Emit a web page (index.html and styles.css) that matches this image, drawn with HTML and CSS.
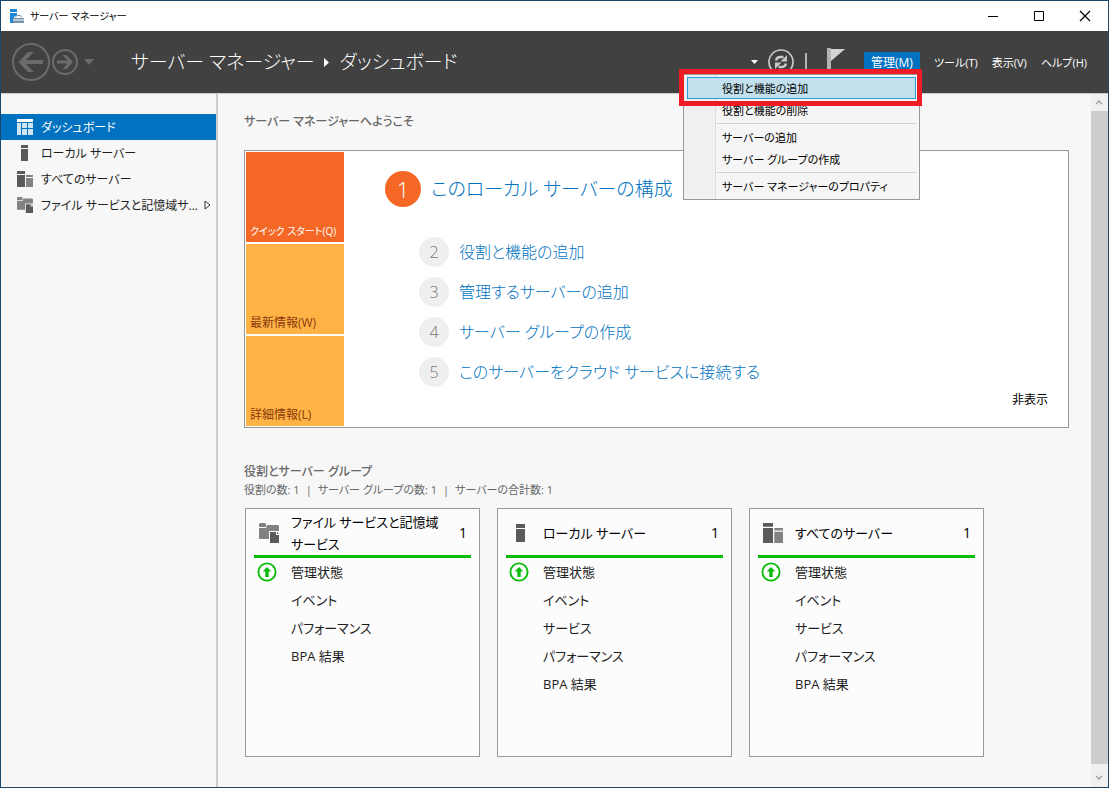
FILE: index.html
```html
<!DOCTYPE html>
<html lang="ja">
<head>
<meta charset="utf-8">
<meta name="viewport" content="width=device-width, initial-scale=1">
<title>サーバー マネージャー</title>
<link rel="stylesheet" href="styles.css">
</head>
<body>
<svg class="defs" width="0" height="0" aria-hidden="true">
  <symbol id="i-local" viewBox="0 0 16 16"><path fill="#5a5a5a" d="M4 0h7v3H4zM4 4h7v12H4z"/></symbol>
  <symbol id="i-all" viewBox="0 0 16 16"><path fill="#5a5a5a" d="M0 0h8v3H0zM0 4h8v12H0z"/><path fill="#828282" d="M9 4h7v2H9zM9 7h7v9H9z"/></symbol>
  <symbol id="i-files" viewBox="0 0 20 20"><path fill="#828282" d="M0 1l1-1h5l1 1v3H0zM0 5h7l1-3h11l1 1v5H10v8H0z"/><path fill="#5a5a5a" d="M11 9h6v3h3v8h-9z"/><path fill="#5a5a5a" d="M18 9l2 2h-2z"/></symbol>
  <symbol id="i-ok" viewBox="0 0 20 20"><circle cx="10" cy="10" r="8.6" fill="#fff" stroke="#0bbd0b" stroke-width="1.9"/><path fill="#0bbd0b" d="M10 5l4.3 4.6h-2.6V15H8.300V9.600H5.700z"/></symbol>
</svg>
<div class="window">
  <header class="titlebar">
    <svg class="app-icon" width="14" height="14" viewBox="0 0 14 14"><path fill="#1e88d8" d="M0 0h7v3H0zM0 4h7v2L4 8v6H0z"/><path fill="#7590a8" d="M3 9h11v5H3z"/><path fill="none" stroke="#7590a8" d="M5.500 8.500l1-2h4l1 2"/><path fill="#fff" d="M3 10.500h11v1H3z"/></svg>
    <span class="window-title">サーバー マネージャー</span>
    <div class="window-buttons">
      <button aria-label="最小化"><svg width="12" height="12"><path d="M1 6.500h10" stroke="#000"/></svg></button>
      <button aria-label="最大化"><svg width="12" height="12"><path d="M1.500 1.500h9v9h-9z" fill="none" stroke="#000"/></svg></button>
      <button aria-label="閉じる"><svg width="12" height="12"><path d="M1 1l10 10M11 1L1 11" stroke="#000" stroke-width="1.200"/></svg></button>
    </div>
  </header>

  <div class="navbar">
    <div class="history">
      <button aria-label="戻る"><svg width="38" height="38" viewBox="0 0 38 38"><circle cx="19" cy="19" r="18" fill="none" stroke="#6b6b6b" stroke-width="2"/><path d="M31 17v4H14l8 8h-6L6.500 19 16 9h6l-8 8z" fill="#6b6b6b"/></svg></button>
      <button aria-label="進む"><svg width="26" height="26" viewBox="0 0 26 26"><circle cx="13" cy="13" r="12" fill="none" stroke="#6b6b6b" stroke-width="2"/><path d="M5 11.500v3h10.500L10.500 20h4l6.500-7-6.500-7h-4l5 5.500z" fill="#6b6b6b"/></svg></button>
      <button aria-label="履歴"><svg width="10" height="6"><path d="M0 0h10L5 6z" fill="#6b6b6b"/></svg></button>
    </div>
    <h1 class="breadcrumb">
      <span>サーバー マネージャー</span>
      <svg width="5" height="9"><path d="M0 0l5 4.500L0 9z" fill="#fff"/></svg>
      <span>ダッシュボード</span>
    </h1>
    <div class="tools">
      <svg class="drop" width="7" height="4"><path d="M0 0h7L3.500 4z" fill="#fff"/></svg>
      <button aria-label="最新の情報に更新"><svg width="26" height="26" viewBox="0 0 26 26"><circle cx="13" cy="13" r="12" fill="none" stroke="#c8c8c8" stroke-width="1.700"/><path d="M8 11.500C8.500 9 10 8 12.500 8h3M18 14.500c-.5 2.500-2 3.500-4.500 3.500h-3" fill="none" stroke="#c8c8c8" stroke-width="2.400"/><path d="M19 6v6.500h-6.500zM7 20v-6.500h6.500z" fill="#c8c8c8"/></svg></button>
      <span class="divider"></span>
      <button aria-label="通知"><svg width="18" height="28" viewBox="0 0 18 28"><path d="M0 0h4v28H0z" fill="#b4b4b4"/><path d="M4 1h14L4 13z" fill="#d4d4d4"/></svg></button>
    </div>
    <nav class="menubar">
      <div class="menu-host">
        <button class="menu-button active" aria-expanded="true">管理(M)</button>
        <div class="menu" role="menu">
          <button role="menuitem" class="selected">役割と機能の追加</button>
          <button role="menuitem">役割と機能の削除</button>
          <hr>
          <button role="menuitem">サーバーの追加</button>
          <button role="menuitem">サーバー グループの作成</button>
          <hr>
          <button role="menuitem">サーバー マネージャーのプロパティ</button>
          <div class="highlight"></div>
        </div>
      </div>
      <button class="menu-button">ツール(T)</button>
      <button class="menu-button">表示(V)</button>
      <button class="menu-button">ヘルプ(H)</button>
    </nav>
  </div>

  <div class="body">
    <nav class="sidebar">
      <a href="#" class="side-item current"><svg width="16" height="16"><path fill="#fff" d="M0 0h16v3H0z"/><path fill="#cfe5f4" d="M0 4h4v12H0zM5 4h5v5H5zM11 4h5v5h-5zM5 10h5v6H5zM11 10h5v6h-5z"/></svg><span>ダッシュボード</span></a>
      <a href="#" class="side-item"><svg width="16" height="16"><use href="#i-local"/></svg><span>ローカル サーバー</span></a>
      <a href="#" class="side-item"><svg width="16" height="16"><use href="#i-all"/></svg><span>すべてのサーバー</span></a>
      <a href="#" class="side-item"><svg width="16" height="16"><use href="#i-files"/></svg><span>ファイル サービスと記憶域サ...</span><svg class="expand" width="7" height="10"><path d="M1 1l5 4-5 4z" fill="#fff" stroke="#333"/></svg></a>
    </nav>

    <main class="content">
      <h2>サーバー マネージャーへようこそ</h2>
      <section class="welcome">
        <div class="tiles">
          <button class="tile tile-on">クイック スタート(Q)</button>
          <button class="tile">最新情報(W)</button>
          <button class="tile">詳細情報(L)</button>
        </div>
        <ol class="steps">
          <li class="step first"><span class="num">1</span><a href="#">このローカル サーバーの構成</a></li>
          <li class="step"><span class="num">2</span><a href="#">役割と機能の追加</a></li>
          <li class="step"><span class="num">3</span><a href="#">管理するサーバーの追加</a></li>
          <li class="step"><span class="num">4</span><a href="#">サーバー グループの作成</a></li>
          <li class="step"><span class="num">5</span><a href="#">このサーバーをクラウド サービスに接続する</a></li>
        </ol>
        <button class="hide">非表示</button>
      </section>

      <h2 class="groups-title">役割とサーバー グループ</h2>
      <p class="counts"><span>役割の数: 1</span><span>|</span><span>サーバー グループの数: 1</span><span>|</span><span>サーバーの合計数: 1</span></p>
      <div class="cards">
        <article class="card">
          <h3><svg width="20" height="20"><use href="#i-files"/></svg><span>ファイル サービスと記憶域<br>サービス</span><b>1</b></h3>
          <ul>
            <li><svg width="20" height="20"><use href="#i-ok"/></svg>管理状態</li>
            <li>イベント</li>
            <li>パフォーマンス</li>
            <li>BPA 結果</li>
          </ul>
        </article>
        <article class="card">
          <h3><svg width="20" height="18" viewBox="0 0 20 18"><path fill="#5a5a5a" d="M5 0h9v4H5zM5 5h9v13H5z"/></svg><span>ローカル サーバー</span><b>1</b></h3>
          <ul>
            <li><svg width="20" height="20"><use href="#i-ok"/></svg>管理状態</li>
            <li>イベント</li>
            <li>サービス</li>
            <li>パフォーマンス</li>
            <li>BPA 結果</li>
          </ul>
        </article>
        <article class="card">
          <h3><svg width="20" height="20"><use href="#i-all"/></svg><span>すべてのサーバー</span><b>1</b></h3>
          <ul>
            <li><svg width="20" height="20"><use href="#i-ok"/></svg>管理状態</li>
            <li>イベント</li>
            <li>サービス</li>
            <li>パフォーマンス</li>
            <li>BPA 結果</li>
          </ul>
        </article>
      </div>
    </main>

    <div class="scrollbar">
      <svg width="16" height="17"><path d="M5 10l3-3 3 3" fill="none" stroke="#a0a0a0" stroke-width="1.500"/></svg>
      <div class="thumb"></div>
      <svg width="16" height="23"><path d="M5 12l3 3 3-3" fill="none" stroke="#a0a0a0" stroke-width="1.500"/></svg>
    </div>
  </div>
</div>
</body>
</html>
```
FILE: styles.css
```css
* { box-sizing: border-box; }
body {
  margin: 0;
  font-family: "Open Sans", "Noto Sans CJK JP", sans-serif;
  font-size: 12px;
  line-height: 20px;
  font-feature-settings: "palt";
  color: #000;
}
button { font: inherit; font-feature-settings: inherit; color: inherit; background: none; border: 0; padding: 0; white-space: nowrap; }
a { color: inherit; text-decoration: none; }
svg { display: block; flex: none; }
h1, h2, h3, p, ul, ol { margin: 0; padding: 0; list-style: none; font-weight: 400; }
.defs { position: absolute; }

.window { min-height: 100vh; display: flex; flex-direction: column; border: 1px solid #19476b; background: #f7f7f7; }

.titlebar { display: flex; align-items: center; height: 30px; padding-left: 9px; background: #fff; }
.window-title { margin-left: 6px; font-size: 10px; }
.window-buttons { display: flex; margin-left: auto; }
.window-buttons button { width: 46px; height: 28px; display: grid; place-items: center; }

.navbar { display: flex; align-items: center; height: 63px; background: #414141; border-bottom: 1px solid #ccc; color: #fff; padding: 0 21px 0 11px; }
.history { display: flex; align-items: center; gap: 2px; }
.history button:last-child { margin-left: 4px; }
.breadcrumb { display: flex; align-items: center; gap: 10px; margin-left: 37px; font-size: 19px; line-height: 32px; font-weight: 300; white-space: nowrap; }
.tools { display: flex; align-items: center; margin-left: auto; }
.tools .drop { margin-right: 10px; }
.divider { width: 2px; height: 18px; margin: 0 20px 0 11px; background: #b4b4b4; }
.menubar { display: flex; align-items: center; gap: 14px; margin-left: 19px; font-size: 11px; }
.menu-host { position: relative; }
.menu-button { display: block; padding-top: 1px; line-height: 19px; }
.menu-button.active { background: #0072c0; width: 56px; font-size: 12px; }

.menu { position: absolute; z-index: 2; top: 22px; right: 0; width: 237px; padding: 2px 3px; border: 1px solid #999; background: linear-gradient(90deg, #f0f0f0 31px, #dcdcdc 31px, #dcdcdc 32px, #f5f5f5 32px); color: #000; }
.menu button { display: block; width: 100%; height: 22px; padding: 1px 0 0 35px; line-height: 21px; text-align: left; }
.menu .selected { padding: 0 0 0 34px; border: 1px solid #2a9bdb; background: #c3e0ee; }
.menu hr { height: 1px; margin: 2px 0 2px 30px; border: 0; background: #d2d2d2; }
.highlight { position: absolute; top: -6px; left: -5px; right: -3px; height: 37px; border: 5px solid #ee1c25; }

.body { flex: 1; display: flex; }
.sidebar { width: 217px; flex: none; padding-top: 20px; border-right: 2px solid #ccc; }
.side-item { display: flex; align-items: center; height: 26px; padding: 0 5px 0 16px; font-size: 12px; white-space: nowrap; color: #1e1e1e; }
.side-item span { margin-left: 8px; padding-top: 2px; }
.side-item.current { background: #0072c0; color: #fff; }
.side-item .expand { margin-left: auto; }

.content { flex: 1; min-width: 0; padding: 18px 22px 30px 26px; }
h2 { font-size: 12px; font-weight: 500; color: #666; }
.welcome { display: flex; margin-top: 18px; border: 1px solid #999; background: #fff; }
.tiles { display: flex; flex-direction: column; gap: 2px; padding: 1px; width: 100px; flex: none; }
.tile { display: flex; align-items: flex-end; height: 90px; padding: 0 0 1px 4px; background: #ffb345; color: #8a3a0c; }
.tile-on { background: #f56724; color: #fff; font-size: 10px; }
.steps { flex: 1; padding: 20px 0 0 74px; font-size: 16px; font-weight: 300; color: #0072c0; }
.step { display: flex; align-items: center; gap: 10px; margin-bottom: 10px; line-height: 30px; }
.num { width: 30px; border-radius: 50%; background: #efefef; color: #777; text-align: center; }
.step.first { margin: 0 0 30px -34px; font-size: 19px; line-height: 36px; }
.step.first .num { width: 36px; background: #f56724; color: #fff; font-size: 22px; }
.hide { align-self: flex-end; margin: 0 20px 17px 0; }

.groups-title { margin-top: 34px; }
.counts { display: flex; gap: 6px; font-size: 11px; line-height: 16px; color: #666; }
.cards { display: flex; flex-wrap: wrap; gap: 17px; margin: 10px 0 0 1px; }
.card { width: 235px; min-height: 249px; padding: 0 8px; border: 1px solid #999; background: #fcfcfc; }
.card h3 { display: flex; align-items: center; min-height: 49px; padding: 2px 4px 0 5px; border-bottom: 3px solid #0bbd0b; font-size: 13px; line-height: 22px; }
.card h3 span { flex: 1; margin-left: 12px; }
.card h3 b { font-size: 14px; font-weight: 400; }
.card li { position: relative; padding-left: 37px; font-size: 13px; line-height: 28px; color: #1e1e1e; }
.card li svg { position: absolute; left: 3px; top: 4px; }

.scrollbar { width: 17px; flex: none; display: flex; flex-direction: column; background: #f0f0f0; }
.thumb { flex: 1; background: #cdcdcd; }
```
